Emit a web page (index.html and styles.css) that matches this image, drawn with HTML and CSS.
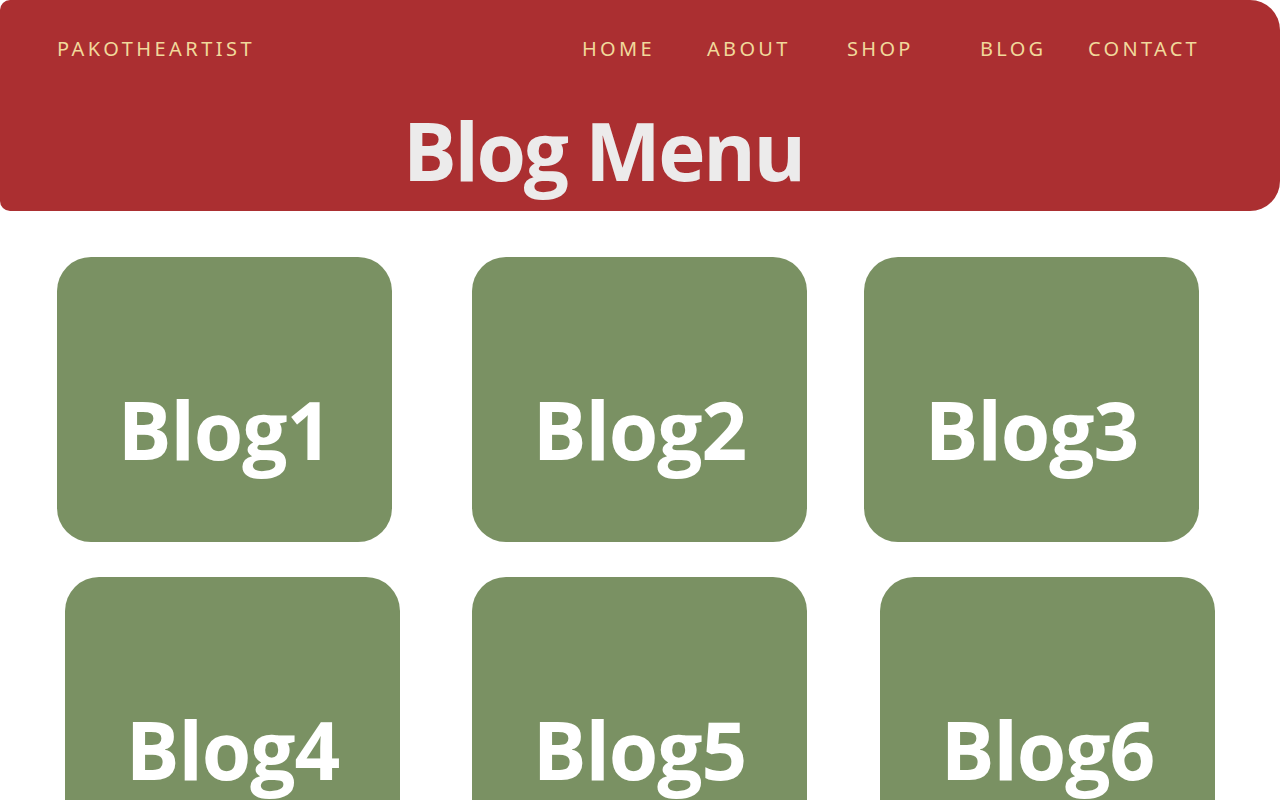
FILE: index.html
```html
<!DOCTYPE html>
<html>
<head>
<meta charset="utf-8">
<title>Blog Menu</title>
<link rel="stylesheet" href="styles.css">
</head>
<body>
<header class="hero">
  <nav class="topbar">
    <div class="brand">PAKOTHEARTIST</div>
    <ul class="links">
      <li class="l-home">HOME</li>
      <li class="l-about">ABOUT</li>
      <li class="l-shop">SHOP</li>
      <li class="l-blog">BLOG</li>
      <li class="l-contact">CONTACT</li>
    </ul>
  </nav>
  <h1 class="title">Blog Menu</h1>
</header>
<main class="cards">
  <div class="row row-a">
    <div class="card">Blog1</div>
    <div class="card">Blog2</div>
    <div class="card">Blog3</div>
  </div>
  <div class="row row-b">
    <div class="card">Blog4</div>
    <div class="card">Blog5</div>
    <div class="card">Blog6</div>
  </div>
</main>
</body>
</html>
```
FILE: styles.css
```css
* { box-sizing: border-box; }
html, body { margin: 0; padding: 0; background: #ffffff; }
body { width: 1280px; height: 800px; overflow: hidden; font-family: "Open Sans", sans-serif; }

.hero {
  background: #ab2f31;
  height: 211px;
  border-radius: 10px 30px 30px 10px;
  padding-top: 35px;
}
.topbar {
  display: flex;
  align-items: center;
  padding: 0 0 0 57px;
  height: 28px;
}
.brand, .links li {
  font-family: "Noto Sans", sans-serif;
  font-size: 20px;
  color: #f1d99b;
  line-height: 28px;
}
.brand { letter-spacing: 3.45px; }
.links li { letter-spacing: 3.3px; }
.links {
  list-style: none;
  margin: 0 0 0 auto;
  padding: 0;
  display: flex;
  width: 698px;
}
.l-home { width: 125px; }
.l-about { width: 140px; }
.l-shop { width: 133px; }
.l-blog { width: 108px; }

.title {
  margin: 32px 0 0 403px;
  font-family: "Open Sans", sans-serif;
  font-weight: 700;
  font-size: 80px;
  line-height: 110px;
  color: #ecebeb;
  letter-spacing: -2.3px;
}

.cards { padding-top: 46px; }
.row { display: flex; }
.row-a { padding-left: 57px; margin-bottom: 35px; }
.row-a .card:nth-child(2) { margin-left: 80px; }
.row-a .card:nth-child(3) { margin-left: 57px; }
.row-b { padding-left: 65px; }
.row-b .card:nth-child(2) { margin-left: 72px; }
.row-b .card:nth-child(3) { margin-left: 73px; }

.card {
  width: 335px;
  height: 285px;
  background: #7a9163;
  border-radius: 34px;
  display: flex;
  justify-content: center;
  padding-top: 122px;
  font-family: "Open Sans", sans-serif;
  font-weight: 700;
  font-size: 80px;
  line-height: 100px;
  color: #ffffff;
  letter-spacing: -1px;
}
```
